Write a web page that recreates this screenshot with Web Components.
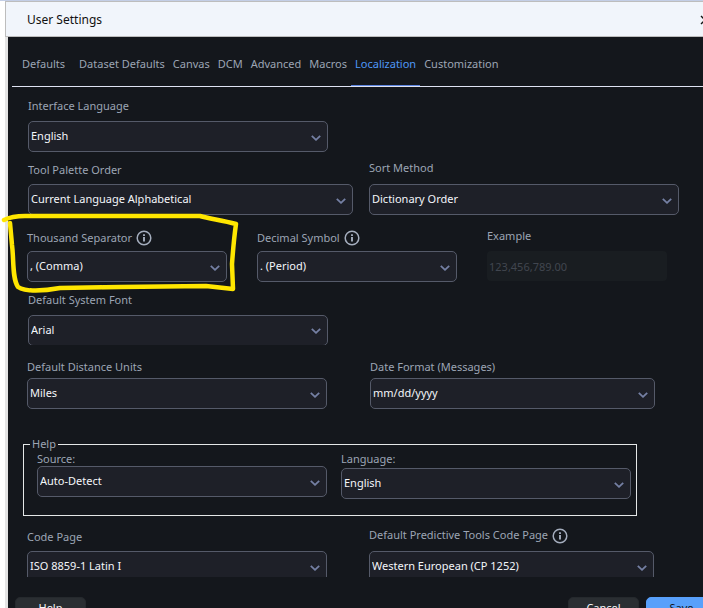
<!DOCTYPE html>
<html lang="en">
<head>
<meta charset="utf-8">
<title>User Settings</title>
<style>
  html { height: 100%; background: #fff; }
  body { margin: 0; height: 100%; overflow: hidden; font-family: "Noto Sans", "Open Sans", sans-serif; font-size: 11px; line-height: 14px; color: #9ca5b4; }
</style>
</head>
<body>
<settings-window>
  <title-bar slot="title">User Settings</title-bar>
  <tab-strip slot="tabs" active="Localization" tabs="Defaults|Dataset Defaults|Canvas|DCM|Advanced|Macros|Localization|Customization"></tab-strip>

  <form-row class="r1" cols="300fr 355fr">
    <select-field label="Interface Language" value="English"></select-field>
  </form-row>
  <form-row class="r2" cols="325fr 310fr" style="--gap:16px">
    <select-field label="Tool Palette Order" value="Current Language Alphabetical"></select-field>
    <select-field label="Sort Method" value="Dictionary Order" class="high"></select-field>
  </form-row>
  <form-row class="r3" cols="200fr 200fr 180fr" style="--gap:30px">
    <select-field label="Thousand Separator" value=", (Comma)" info><hand-drawn-box slot="mark"></hand-drawn-box></select-field>
    <select-field label="Decimal Symbol" value=". (Period)" info></select-field>
    <example-field label="Example" value="123,456,789.00"></example-field>
  </form-row>
  <form-row class="r4" cols="300fr 355fr">
    <select-field label="Default System Font" value="Arial" class="cut"></select-field>
  </form-row>
  <form-row class="r5" cols="300fr 285fr" style="--gap:43px">
    <select-field label="Default Distance Units" value="Miles"></select-field>
    <select-field label="Date Format (Messages)" value="mm/dd/yyyy"></select-field>
  </form-row>
  <field-group label="Help">
    <form-row cols="290fr 290fr" style="--gap:14px;--align:start">
      <select-field label="Source:" value="Auto-Detect"></select-field>
      <select-field label="Language:" value="English" style="--label-gap:2px"></select-field>
    </form-row>
  </field-group>
  <form-row class="r6" cols="300fr 285fr" style="--gap:42px">
    <select-field label="Code Page" value="ISO 8859-1 Latin I"></select-field>
    <select-field label="Default Predictive Tools Code Page" value="Western European (CP 1252)" info class="high"></select-field>
  </form-row>

  <action-button slot="footer">Help</action-button>
  <action-button slot="footer" style="margin-left:auto">Cancel</action-button>
  <action-button slot="footer" primary>Save</action-button>
</settings-window>

<script>
const define = (name, html, setup) => {
  const tpl = document.createElement('template');
  tpl.innerHTML = html;
  customElements.define(name, class extends HTMLElement {
    constructor() {
      super();
      this.attachShadow({ mode: 'open' }).append(tpl.content.cloneNode(true));
    }
    connectedCallback() { if (setup) setup(this, this.shadowRoot); }
  });
};

define('settings-window', `
  <style>
    :host { display: flex; flex-direction: column; height: 100%; box-sizing: border-box; padding-left: 5px; border-top: 1px solid #c3cee6; }
    .main { flex: 1; min-height: 0; display: flex; flex-direction: column; background: #14171c; border-left: 3px solid #e4e4e4; }
    .content { flex: 1; min-height: 0; overflow-x: visible; overflow-y: clip; padding-top: 12px; }
    footer { display: flex; gap: 7px; padding: 20px 0 0 7px; margin-right: -14px; height: 11px; }
    ::slotted(form-row) { padding: 0 29px 0 19px; }
    ::slotted(.r1), ::slotted(.r4) { padding: 0 20px; }
    ::slotted(.r2) { padding: 0 24px 0 20px; margin-top: 9px; --label-gap: 7px; }
    ::slotted(.r3) { padding: 0 36px 0 19px; margin-top: 14px; --label-gap: 6px; }
    ::slotted(.r4) { margin-top: 11px; }
    ::slotted(.r5) { padding: 0 48px 0 19px; margin-top: 15px; --label-gap: 4px; }
    ::slotted(.r6) { padding: 0 49px 0 19px; margin-top: 12px; --label-gap: 7px; }
  </style>
  <slot name="title"></slot>
  <div class="main">
    <slot name="tabs"></slot>
    <div class="content"><slot></slot></div>
    <footer><slot name="footer"></slot></footer>
  </div>`);

define('title-bar', `
  <style>
    :host { display: flex; align-items: center; justify-content: space-between; height: 32px; padding: 2px 0 0 21px; background: #f1f5fb; border: solid #bdbdbd; border-width: 1px 0 1px 1px; color: #111; font-size: 12px; overflow: hidden; }
    button { border: 0; background: none; padding: 0; display: block; margin-right: -7px; flex: none; }
    svg { display: block; }
  </style>
  <span><slot></slot></span>
  <button aria-label="Close"><svg width="10" height="10" viewBox="0 0 10 10"><path d="M1 1 9 9M9 1 1 9" stroke="#111" stroke-width="1.4"/></svg></button>`);

define('tab-strip', `
  <style>
    :host { display: block; padding-left: 4px; }
    nav { display: flex; height: 49px; border-bottom: 1px solid #dfe3f2; padding-left: 6px; }
    a { color: inherit; text-decoration: none; padding: 20px 4px 0; box-sizing: border-box; border-bottom: 1px solid transparent; white-space: nowrap; }
    a:first-child { margin-right: 6px; }
    a[aria-current] { color: #4f97f7; border-color: #5b83e0; }
  </style>
  <nav></nav>`, (el, root) => {
  const nav = root.querySelector('nav');
  nav.replaceChildren(...el.getAttribute('tabs').split('|').map(t => {
    const a = document.createElement('a');
    a.href = '#'; a.textContent = t;
    if (t === el.getAttribute('active')) a.setAttribute('aria-current', 'page');
    return a;
  }));
});

define('form-row', `
  <style>
    :host { display: block; }
    .grid { display: grid; column-gap: var(--gap, 0); align-items: var(--align, end); }
    ::slotted(*) { min-width: 0; }
  </style>
  <div class="grid"><slot></slot></div>`, (el, root) => {
  root.querySelector('.grid').style.gridTemplateColumns = el.getAttribute('cols').replace(/(\d+fr)/g, 'minmax(0, $1)');
});

define('info-icon', `
  <style>:host { display: block; } svg { display: block; }</style>
  <svg width="16" height="16" viewBox="0 0 16 16" fill="none" stroke="#a4adbd"><circle cx="8" cy="8" r="6.8" stroke-width="1.5"/><path d="M8 7v4.5M8 4.2v1.7" stroke-width="1.9"/></svg>`);

define('select-field', `
  <style>
    :host { display: block; position: relative; }
    .label { display: flex; align-items: center; gap: 4px; height: 14px; margin-bottom: var(--label-gap, 8px); white-space: nowrap; }
    :host(.high) .label { height: 16px; align-items: flex-start; }
    .box { display: grid; align-items: center; }
    :host(.cut) .box { height: 30px; overflow: hidden; align-items: start; }
    select, svg { grid-area: 1 / 1; }
    select { appearance: none; width: 100%; height: 31px; box-sizing: border-box; border: 1px solid #555a69; border-radius: 5px; background: #1e2028; color: #f4f6fa; font: inherit; padding: 0 24px 2px 2px; margin: 0; }
    svg { justify-self: end; margin-right: 7px; pointer-events: none; margin-top: 2px; }
    :host(.cut) svg { margin-top: 13px; }
  </style>
  <div class="label"><label for="s"></label></div>
  <div class="box"><select id="s"><option></option></select>
  <svg width="10" height="6" viewBox="0 0 10 6" fill="none" stroke="#7580a4" stroke-width="1.8"><path d="M.8.8 5 4.8 9.2.8"/></svg></div>
  <slot name="mark"></slot>`, (el, root) => {
  root.querySelector('label').textContent = el.getAttribute('label');
  root.querySelector('option').textContent = el.getAttribute('value');
  if (el.hasAttribute('info')) root.querySelector('.label').append(document.createElement('info-icon'));
});

define('example-field', `
  <style>
    :host { display: block; }
    label { display: block; margin-bottom: 8px; }
    input { display: block; width: 100%; height: 30px; box-sizing: border-box; border: 0; border-radius: 4px; background: #191d21; color: #41464f; font: inherit; padding: 0 2px; margin-bottom: 1px; }
  </style>
  <label for="e"></label><input id="e" disabled>`, (el, root) => {
  root.querySelector('label').textContent = el.getAttribute('label');
  root.querySelector('input').value = el.getAttribute('value');
});

define('field-group', `
  <style>
    :host { display: block; padding: 28px 66px 0 15px; --label-gap: 0px; }
    fieldset { margin: 0; min-width: 0; border: 1px solid #e4e7e7; padding: 1px 5px 16px 13px; }
    legend { padding: 0 2px; margin-left: -7px; }
  </style>
  <fieldset><legend></legend><slot></slot></fieldset>`, (el, root) => {
  root.querySelector('legend').textContent = el.getAttribute('label');
});

define('action-button', `
  <style>
    :host { display: block; flex: none; }
    button { width: 71px; height: 24px; border: 1px solid #25292d; border-radius: 5px; background: #2a2e32; color: #f4f6fa; font: inherit; padding: 0 0 3px; }
    :host([primary]) button { background: #58a0fb; border-color: #58a0fb; color: #14171c; }
  </style>
  <button type="button"><slot></slot></button>`);

define('hand-drawn-box', `
  <style>:host { position: absolute; left: -27px; top: -21px; pointer-events: none; } svg { display: block; }</style>
  <svg width="245" height="90" viewBox="0 210 245 90" fill="none" stroke="#ffe600" stroke-width="4.5" stroke-linecap="round" stroke-linejoin="round"><path d="M4 220C10 217 16 216 25 216L200 216C210 219 222 220 236 224C234 238 233 250 232 264L233 289L206 286L120 287L60 288C44 291 25 292 18 287C12 278 14 260 12 245L10 223"/></svg>`);
</script>
</body>
</html>
